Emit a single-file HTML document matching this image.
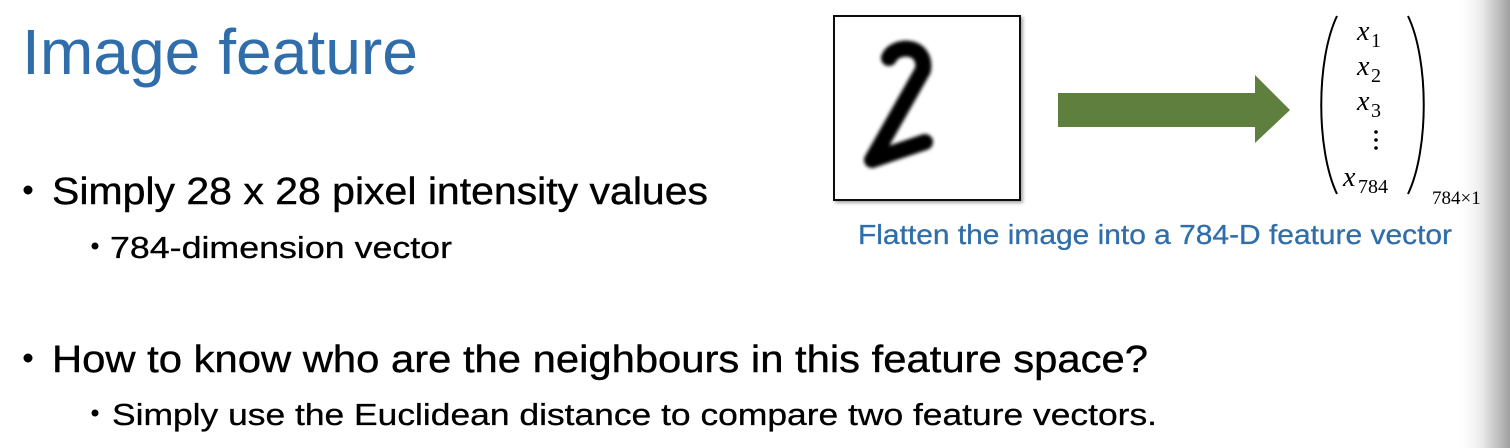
<!DOCTYPE html>
<html><head><meta charset="utf-8"><style>
html,body{margin:0;padding:0;background:#fff;}
svg{display:block;}
</style></head><body>
<svg width="1510" height="448" viewBox="0 0 1510 448" xmlns="http://www.w3.org/2000/svg">
<defs>
<linearGradient id="edge" x1="0" x2="1" y1="0" y2="0">
<stop offset="0" stop-color="#fff" stop-opacity="0"/>
<stop offset="0.5" stop-color="#e8e8e8"/>
<stop offset="1" stop-color="#a0a0a0"/>
</linearGradient>
<filter id="blur" x="-20%" y="-20%" width="140%" height="140%"><feGaussianBlur stdDeviation="1.8"/></filter>
<filter id="sh" x="-10%" y="-10%" width="130%" height="130%"><feDropShadow dx="2" dy="2" stdDeviation="1.5" flood-color="#000" flood-opacity="0.35"/></filter>
</defs>
<rect x="1455" y="0" width="55" height="448" fill="url(#edge)"/>
<g font-family="Liberation Sans, sans-serif">
<text x="22" y="74" font-size="64" fill="#2f6eaa" textLength="396" lengthAdjust="spacingAndGlyphs">Image feature</text>
<circle cx="28" cy="190" r="4.5" fill="#000"/>
<text x="52" y="204" font-size="38" fill="#000" stroke="#000" stroke-width="0.4" textLength="656" lengthAdjust="spacingAndGlyphs">Simply 28 x 28 pixel intensity values</text>
<circle cx="95" cy="246" r="3.5" fill="#000"/>
<text x="110" y="258" font-size="31" fill="#000" stroke="#000" stroke-width="0.3" textLength="342" lengthAdjust="spacingAndGlyphs">784-dimension vector</text>
<circle cx="28" cy="358" r="4.5" fill="#000"/>
<text x="52" y="372" font-size="38" fill="#000" stroke="#000" stroke-width="0.4" textLength="1096" lengthAdjust="spacingAndGlyphs">How to know who are the neighbours in this feature space?</text>
<circle cx="95" cy="413" r="3.5" fill="#000"/>
<text x="112" y="425" font-size="31" fill="#000" stroke="#000" stroke-width="0.3" textLength="1045" lengthAdjust="spacingAndGlyphs">Simply use the Euclidean distance to compare two feature vectors.</text>
<text x="858" y="244" font-size="28" fill="#2f6eaa" stroke="#2f6eaa" stroke-width="0.3" textLength="594" lengthAdjust="spacingAndGlyphs">Flatten the image into a 784-D feature vector</text>
</g>
<rect x="834" y="16" width="186" height="184" fill="#fff" stroke="#111" stroke-width="2" filter="url(#sh)"/>
<path d="M889,58 C895,44 927,44 923,70 L872,160 L925,142" fill="none" stroke="#000" stroke-width="16" stroke-linejoin="round" stroke-linecap="round" filter="url(#blur)"/>
<path d="M1058,93 L1255,93 L1255,75 L1290,110 L1255,143 L1255,127 L1058,127 Z" fill="#5f7f3e"/>
<path d="M1337,16 C1316,60 1316,150 1337,194" fill="none" stroke="#000" stroke-width="2"/>
<path d="M1408,16 C1429,60 1429,150 1408,194" fill="none" stroke="#000" stroke-width="2"/>
<g font-family="Liberation Serif, serif" fill="#000">
<text x="1357" y="40" font-size="28" font-style="italic">x</text><text x="1371" y="47" font-size="20">1</text>
<text x="1357" y="75" font-size="28" font-style="italic">x</text><text x="1371" y="82" font-size="20">2</text>
<text x="1357" y="110" font-size="28" font-style="italic">x</text><text x="1371" y="117" font-size="20">3</text>
<circle cx="1376" cy="132" r="1.8"/><circle cx="1376" cy="140" r="1.8"/><circle cx="1376" cy="148" r="1.8"/>
<text x="1343" y="186" font-size="28" font-style="italic">x</text><text x="1358" y="193" font-size="20">784</text>
<text x="1432" y="204" font-size="19">784×1</text>
</g>
</svg>
</body></html>
